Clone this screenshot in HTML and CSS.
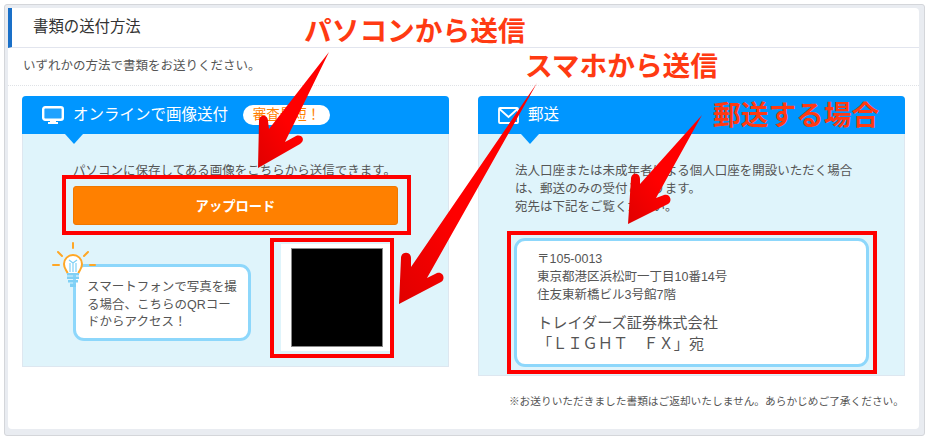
FILE: index.html
```html
<!DOCTYPE html>
<html lang="ja">
<head>
<meta charset="utf-8">
<title>書類の送付方法</title>
<link rel="stylesheet" href="styles.css">
</head>
<body>
<div class="frame">
  <main class="panel">
    <h1 class="title">書類の送付方法</h1>
    <p class="intro">いずれかの方法で書類をお送りください。</p>
    <div class="cards">
      <section class="card card-online">
        <header class="card-head">
          <svg class="icon-monitor" width="22" height="18" viewBox="0 0 22 18"><rect x="1.2" y="1.2" width="19.600" height="12.600" rx="2" fill="#fff" fill-opacity="0.12" stroke="#fff" stroke-width="2.400"/><path d="M8 15h6v1h2v2H6v-2h2z" fill="#fff"/></svg>
          <h2 class="card-title">オンラインで画像送付</h2>
          <span class="badge">審査最短！</span>
        </header>
        <div class="card-body">
          <p class="text">パソコンに保存してある画像をこちらから送信できます。</p>
          <button class="upload" type="button">アップロード</button>
          <div class="qr-row">
            <div class="bubble">
              <svg class="bulb" width="44" height="48" viewBox="0 0 44 48"><circle cx="21" cy="21" r="9" fill="#fff"/><rect x="15" y="27" width="12" height="6" fill="#fff"/><g stroke="#ffa726" stroke-width="2" fill="none" stroke-linecap="round"><path d="M21 1v5M6 10l4 4M36 10l-4 4M1 23h6M38 23h5"/><path d="M15.500 31c-1-3-3.500-4-3.500-9a9 9 0 0 1 18 0c0 5-2.500 6-3.500 9"/></g><path d="M17 18l4 3 4-3M21 21v9M18 21v9M24 21v9" stroke="#7fd0f5" stroke-width="1.200" fill="none"/><path d="M15 31h12v2.500H15zM15 34.500h12V37H15zM16 38h10v2.500H16zM18 41.500h6V45h-6z" fill="#7fd0f5"/></svg>
              スマートフォンで写真を撮る場合、こちらのQRコードからアクセス！
            </div>
            <div class="qr"><div class="qr-code"></div></div>
          </div>
        </div>
      </section>
      <section class="card card-post">
        <header class="card-head">
          <svg class="icon-mail" width="21" height="17" viewBox="0 0 21 17"><rect x="1" y="1" width="19" height="15" rx="1" fill="none" stroke="#fff" stroke-width="1.800"/><path d="M1.500 2l9 8 9-8" fill="none" stroke="#fff" stroke-width="1.800"/></svg>
          <h2 class="card-title">郵送</h2>
        </header>
        <div class="card-body">
          <p class="text">法人口座または未成年者による個人口座を開設いただく場合は、郵送のみの受付となります。<br>宛先は下記をご覧ください。</p>
          <div class="address">
            <p class="addr-lines">〒105-0013<br>東京都港区浜松町一丁目10番14号<br>住友東新橋ビル3号館7階</p>
            <p class="addr-name">トレイダーズ証券株式会社<br>「ＬＩＧＨＴ　ＦＸ」宛</p>
          </div>
        </div>
      </section>
    </div>
    <p class="note">※お送りいただきました書類はご返却いたしません。あらかじめご了承ください。</p>
  </main>
</div>

<span class="label label-pc">パソコンから送信</span>
<span class="label label-sp">スマホから送信</span>
<span class="label label-post">郵送する場合</span>
<svg class="marks" width="929" height="440" viewBox="0 0 929 440">
  <defs>
    <linearGradient id="shade" x1="1" y1="0" x2="0" y2="1"><stop offset="0.6" stop-color="#f00"/><stop offset="1" stop-color="#e00000"/></linearGradient>
  </defs>
  <g fill="none" stroke="#f00" stroke-width="4">
    <rect x="64" y="177" width="345" height="56"/>
    <rect x="272" y="240" width="120" height="116"/>
    <rect x="509" y="233" width="366" height="139"/>
  </g>
  <g fill="url(#shade)">
    <path d="M329 52L269 129 268 121C268 114 259 114 259 121L258 168 300 144C306 140 302 134 296 136L285 142z"/>
    <path d="M537 83L411 267 411 258C411 251 401 251 401 258L399 304 441 282C446 279 443 271 437 273L427 278z"/>
    <path d="M702 115L640 184 640 179C640 172 631 172 631 179L628 224 668 204C673 201 670 193 664 195L656 198z"/>
  </g>
</svg>
</body>
</html>
```

FILE: styles.css
```css
* { box-sizing: border-box; }
html, body { margin: 0; padding: 0; background: #fff; }
body {
  width: 929px;
  height: 440px;
  overflow: hidden;
  padding: 4px;
  position: relative;
  font-family: "Liberation Sans", "Noto Sans CJK JP", sans-serif;
  color: #555;
  font-size: 12.5px;
}
h1, h2, p { margin: 0; font-weight: 400; }

.frame {
  width: 921px;
  height: 432px;
  padding: 3px 5px 6px 3px;
  background: #e9ecf1;
  border: 1px solid #d4d6da;
  border-radius: 3px;
}
.panel {
  height: 100%;
  background: #fff;
  border-radius: 4px;
  display: flex;
  flex-direction: column;
}
.title {
  height: 40px;
  border-left: 4px solid #1a70c8;
  border-bottom: 1px solid #e2e5ee;
  padding-left: 21px;
  font-size: 15.400px;
  line-height: 37px;
  color: #333;
}
.intro {
  height: 38px;
  padding-left: 15px;
  line-height: 37px;
  border-bottom: 1px dotted #dfe2e6;
}
.cards {
  display: flex;
  align-items: flex-start;
  gap: 29px;
  margin-top: 10px;
  padding-left: 14px;
}
.card {
  width: 427px;
  background: #dff4fb;
  border: 1px solid #dde7f0;
  border-top: 0;
  border-radius: 4px 4px 0 0;
}
.card-online { height: 271px; }
.card-post { height: 280px; }
.card-head {
  height: 38px;
  margin: 0 -1px;
  background: #0096ff;
  border-radius: 4px 4px 0 0;
  display: flex;
  align-items: center;
  color: #fff;
  position: relative;
}
.card-head::after {
  content: "";
  position: absolute;
  left: 43px;
  top: 38px;
  border: 9px solid transparent;
  border-top: 10px solid #0096ff;
  border-bottom: 0;
}
.card-title { font-size: 15.500px; line-height: 20px; color: #fff; }
.icon-monitor { margin: 0 9px 0 20px; }
.icon-mail { margin: 0 9px 0 20px; }
.badge {
  width: 87px;
  height: 20px;
  margin-left: 15px;
  border-radius: 10px;
  background: #fff;
  color: #ff8000;
  font-size: 13.500px;
  line-height: 20px;
  text-align: center;
}
.card-body { padding-top: 28px; }
.text { line-height: 18px; }
.card-online .text { padding-left: 50px; }
.card-post .text { padding: 0 36px; }
.upload {
  display: block;
  width: 325px;
  height: 39px;
  margin: 6px 0 0 50px;
  background: #ff8000;
  border: 1px solid #f07800;
  border-radius: 3px;
  color: #fff;
  font: 700 13.300px "Liberation Sans", "Noto Sans CJK JP", sans-serif;
}
.qr-row {
  display: flex;
  align-items: flex-start;
  margin-top: 19px;
  padding-left: 50px;
}
.bubble {
  position: relative;
  width: 178px;
  height: 77px;
  margin-top: 20px;
  padding: 12px 6px 0 11px;
  background: #fff;
  border: 3px solid #8dd7fb;
  border-radius: 11px;
  line-height: 17.500px;
}
.bulb {
  position: absolute;
  left: -24px;
  top: -25px;
}
.qr {
  width: 109px;
  height: 107px;
  margin-left: 30px;
  padding: 4px 7px 0 10px;
  background: #fff;
}
.qr-code {
  width: 92px;
  height: 99px;
  background: #000;
  border: 1px solid #888;
}
.address {
  width: 355px;
  height: 129px;
  margin: 22px 0 0 35px;
  padding: 9px 20px 0 20px;
  background: #fff;
  border: 3px solid #8dd7fb;
  border-radius: 11px;
}
.addr-lines { line-height: 18px; }
.addr-name { margin-top: 9px; font-size: 15.200px; line-height: 20.500px; }
.note {
  margin-top: 17px;
  padding-right: 15px;
  font-size: 10.700px;
  line-height: 16px;
  text-align: right;
}

.label {
  position: absolute;
  font-size: 27.700px;
  font-weight: 700;
  line-height: 36px;
  color: #ff3a12;
  white-space: nowrap;
}
.label-pc { left: 304px; top: 14px; }
.label-sp { left: 525px; top: 49px; }
.label-post { left: 713px; top: 98px; }
.marks { position: absolute; left: 0; top: 0; pointer-events: none; }
```
